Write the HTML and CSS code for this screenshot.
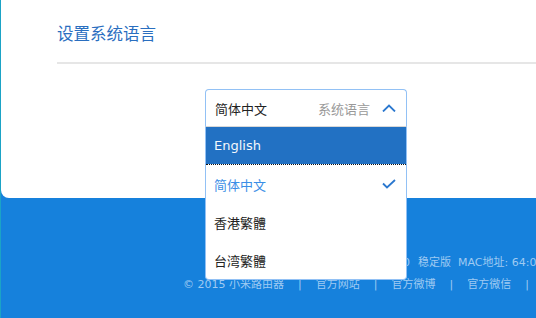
FILE: index.html
```html
<!DOCTYPE html>
<html lang="zh-CN">
<head>
  <meta charset="UTF-8" />
  <meta name="viewport" content="width=device-width, initial-scale=1.0"/>
  <title>小米路由器 - 系统语言</title>
  <link rel="stylesheet" href="styles.css">
</head>
<body>
  <div class="card">
    <h2 class="title">设置系统语言</h2>

    <div class="lang-select">
      <div class="select-head">
        <span class="current">简体中文</span>
        <span class="hint">系统语言</span>
        <svg class="arrow" width="14" height="8" viewBox="0 0 14 8">
          <path d="M1 7.5 L7 1.5 L13 7.5" fill="none" stroke="#2b78cf" stroke-width="1.8"/>
        </svg>
      </div>
      <ul class="options">
        <li class="hover">English</li>
        <li class="selected">
          简体中文
          <svg width="14" height="10" viewBox="0 0 14 10">
            <path d="M1 4.5 L5 8.5 L13 1" fill="none" stroke="#2b78cf" stroke-width="1.8"/>
          </svg>
        </li>
        <li>香港繁體</li>
        <li>台湾繁體</li>
      </ul>
    </div>
  </div>

  <div class="footer">
    <p class="meta"><span class="ver">MiWiFi ROM 2.8.50</span>稳定版&nbsp;&nbsp;MAC地址: 64:09:80:4F:2A:1C</p>
    <p class="links"><span>© 2015 小米路由器</span><i>|</i><a href="#">官方网站</a><i>|</i><a href="#">官方微博</a><i>|</i><a href="#">官方微信</a><i>|</i><a href="#">用户社区</a></p>
  </div>
</body>
</html>
```

FILE: styles.css
```css
* {
  box-sizing: border-box;
  margin: 0;
  padding: 0;
}

body {
  background-color: #1681dc;
  border-left: 1px solid #1ba3c6;
  font-family: "DejaVu Sans", "Noto Sans CJK SC", sans-serif;
  height: 318px;
  overflow: hidden;
}

.card {
  background: #fff;
  height: 198px;
  border-radius: 0 0 0 8px;
  padding: 22px 0 0 56px;
}

.title {
  font-size: 16.5px;
  font-weight: normal;
  line-height: 26px;
  color: #2a6ebf;
  padding-bottom: 14px;
  border-bottom: 2px solid #e6e6e6;
}

.lang-select {
  position: relative;
  width: 202px;
  margin: 25px 0 0 148px;
}

.select-head {
  display: flex;
  align-items: center;
  height: 38px;
  padding: 0 10px 0 9px;
  border: 1px solid #92c1f5;
  border-bottom-color: #d8d8d8;
  border-radius: 4px 4px 0 0;
  font-size: 13px;
  background: #fff;
}

.current {
  color: #222;
  flex: 1;
}

.hint {
  color: #999;
  margin-right: 12px;
}

.options {
  position: absolute;
  top: 38px;
  left: 0;
  width: 202px;
  list-style: none;
  background: #fff;
  border: 1px solid #92c1f5;
  border-top: none;
  border-radius: 0 0 4px 4px;
  z-index: 2;
}

.options li {
  display: flex;
  align-items: center;
  justify-content: space-between;
  height: 38px;
  padding: 0 10px 0 8px;
  font-size: 13px;
  color: #222;
}

.options li.hover {
  background: #2271c3;
  background-clip: padding-box;
  color: #f4f8fc;
  border-bottom: 1px dotted #111;
}

.options li.selected {
  color: #3a8ee6;
}

.footer {
  padding-top: 56px;
  color: #9fcaf2;
  font-size: 11px;
  white-space: nowrap;
}

.meta {
  padding-left: 183px;
  line-height: 18px;
}

.ver {
  display: inline-block;
  width: 226px;
  margin-right: 8px;
  text-align: right;
}

.links {
  display: flex;
  padding-left: 182px;
  margin-top: 4px;
  line-height: 18px;
}

.links a {
  color: #9fcaf2;
  text-decoration: none;
}

.links i {
  font-style: normal;
  margin: 0 14px;
}
```
